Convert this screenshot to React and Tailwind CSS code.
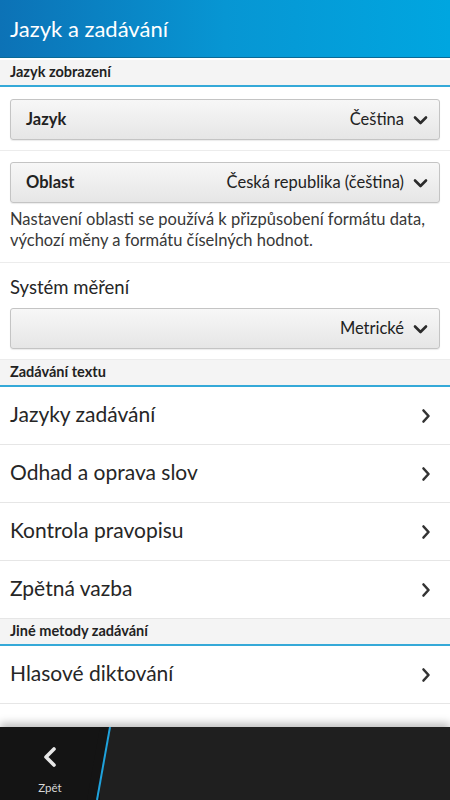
import React from 'react';

const font = { fontFamily: 'Lato, "Open Sans", "Liberation Sans", sans-serif' };

const Chevron = ({ className = '' }) => (
  <svg width="15" height="10" viewBox="0 0 15 10" className={className}>
    <path d="M2 2.5 L7.5 8 L13 2.5" fill="none" stroke="#2b2b2b" strokeWidth="2.6" strokeLinecap="round" strokeLinejoin="round" />
  </svg>
);

const RightArrow = () => (
  <svg width="10" height="16" viewBox="0 0 10 16">
    <path d="M2.5 2.5 L7.5 8 L2.5 13.5" fill="none" stroke="#333" strokeWidth="2.6" strokeLinecap="round" strokeLinejoin="round" />
  </svg>
);

const SectionHeader = ({ children }) => (
  <div className="h-[27px] bg-[#f4f4f4] border-b-2 border-[#35a9d8] px-[10px] flex items-center">
    <span className="text-[14.5px] font-bold text-[#222] leading-none">{children}</span>
  </div>
);

// Dropdown button
const Select = ({ label, value }) => (
  <div className="h-[41px] mx-[10px] rounded-[3px] border border-[#c4c4c4] bg-gradient-to-b from-[#f7f7f7] to-[#e6e6e6] shadow-[0_1px_1px_rgba(0,0,0,0.08)] flex items-center pl-[15px] pr-[11px]">
    <span className="text-[16.5px] font-bold text-[#222] flex-1">{label}</span>
    <span className="text-[16.5px] text-[#222] mr-[9px]">{value}</span>
    <Chevron />
  </div>
);

const ListItem = ({ title }) => (
  <div className="h-[58px] border-b border-[#e6e6e6] flex items-center pl-[10px] pr-[19px]">
    <span className="flex-1 text-[21px] text-[#262626] -mt-[3px]">{title}</span>
    <RightArrow />
  </div>
);

export default function App() {
  return (
    <div className="w-[450px] h-[800px] bg-white flex flex-col overflow-hidden" style={font}>
      {/* Title bar */}
      <div className="h-[58px] bg-gradient-to-r from-[#0c72b6] via-[#0796d3] to-[#00a6e0] border-b border-[#0a6a96] flex items-center px-[10px]">
        <h1 className="text-[22px] text-white">Jazyk a zadávání</h1>
      </div>
      <div className="h-[2px] bg-white" />

      <SectionHeader>Jazyk zobrazení</SectionHeader>

      <div className="pt-[12px] pb-[10px] border-b border-[#ececec]">
        <Select label="Jazyk" value="Čeština" />
      </div>

      <div className="pt-[11px] pb-[11px] border-b border-[#ececec]">
        <Select label="Oblast" value="Česká republika (čeština)" />
        <p className="px-[10px] mt-[6px] text-[16.5px] leading-[21px] text-[#383838]">
          Nastavení oblasti se používá k přizpůsobení formátu data, výchozí měny a formátu číselných hodnot.
        </p>
      </div>

      <div className="pt-[12px] pb-[10px] border-b border-[#ececec]">
        <div className="px-[10px] text-[18.5px] text-[#262626] leading-[24px] mb-[9px]">Systém měření</div>
        <Select label="" value="Metrické" />
      </div>

      <SectionHeader>Zadávání textu</SectionHeader>
      <ListItem title="Jazyky zadávání" />
      <ListItem title="Odhad a oprava slov" />
      <ListItem title="Kontrola pravopisu" />
      <ListItem title="Zpětná vazba" />

      <SectionHeader>Jiné metody zadávání</SectionHeader>
      <ListItem title="Hlasové diktování" />

      <div className="flex-1" />

      {/* Action bar */}
      <div className="h-[73px] relative bg-[#1f1f1f] shadow-[0_-4px_8px_rgba(0,0,0,0.25)] flex">
        <div className="w-[100px] bg-[#141414] flex flex-col items-center pt-[19px] gap-[14px]">
          <svg width="18" height="22" viewBox="0 0 18 22">
            <path d="M13 3 L5 11 L13 19" fill="none" stroke="#e8e8e8" strokeWidth="3.6" strokeLinecap="round" strokeLinejoin="round" />
          </svg>
          <span className="text-[11.5px] text-[#d8d8d8] leading-none">Zpět</span>
        </div>
        <svg className="absolute left-0 top-0" width="130" height="73" viewBox="0 0 130 73">
          <polygon points="100,0 110,0 97,73 87,73" fill="#141414" />
          <line x1="110" y1="0" x2="97" y2="73" stroke="#1fa2dc" strokeWidth="2" />
        </svg>
      </div>
    </div>
  );
}
